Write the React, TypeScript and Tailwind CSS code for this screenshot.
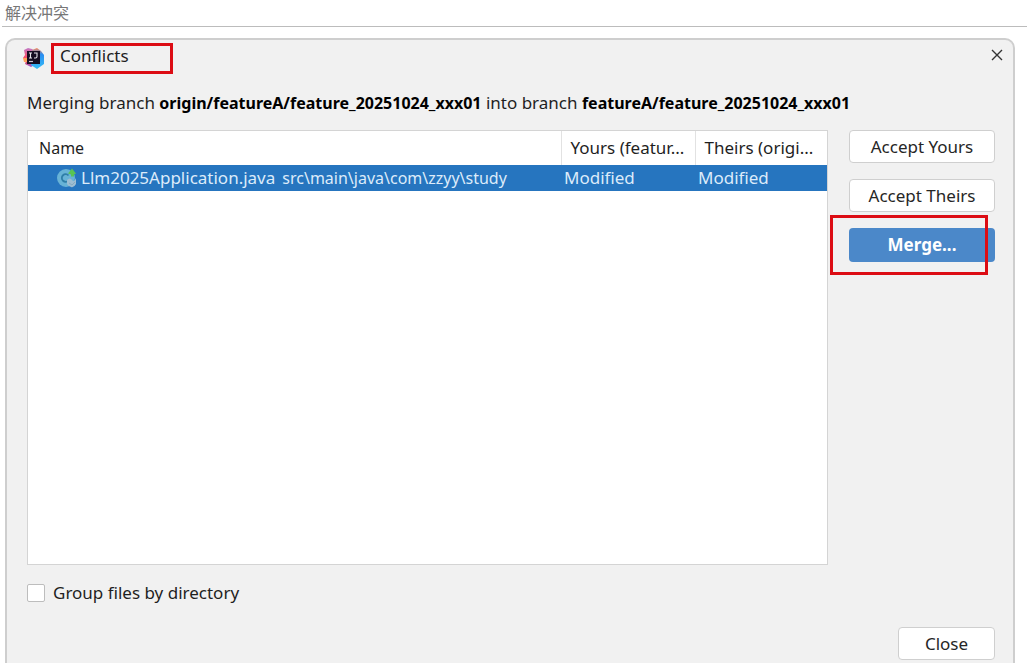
import React, { useState } from 'react'

const files = [
    {
        name: 'Llm2025Application.java',
        path: 'src\\main\\java\\com\\zzyy\\study',
        yours: 'Modified',
        theirs: 'Modified',
    },
]

function IdeaLogo() {
    return (
        <svg width="22" height="22" viewBox="0 0 22 22" aria-hidden="true">
            <defs>
                <linearGradient id="warm" x1="0" y1="0" x2="0" y2="1">
                    <stop offset="0" stopColor="#c07ac8" />
                    <stop offset="0.4" stopColor="#f0567a" />
                    <stop offset="0.7" stopColor="#f5455c" />
                    <stop offset="1" stopColor="#8a5cd8" />
                </linearGradient>
                <linearGradient id="cool" x1="0" y1="0" x2="0" y2="1">
                    <stop offset="0" stopColor="#ff8a5c" />
                    <stop offset="0.3" stopColor="#2b8cf0" />
                    <stop offset="1" stopColor="#35bdf7" />
                </linearGradient>
            </defs>
            <path d="M1 2l4-2 4 1 4 3v12l-5 3-6-3 1-3-3-3 2-3z" fill="url(#warm)" />
            <path d="M0 10h5v4H1z" fill="#ffa35c" />
            <path d="M9 2l5-2 4 3 3 4v9l-7 5-6-4z" fill="url(#cool)" />
            <path d="M4 3h13v13H4z" fill="#150d22" />
            <path d="M6 5h3M7.5 5v5M6 10h3M11 5h3v3.5q0 1.5-1.5 1.5H11" fill="none" stroke="#e8e4ec" strokeWidth="1.1" />
            <path d="M6 13.5h4" stroke="#c9c2d0" strokeWidth="1.2" />
        </svg>
    )
}

function ClassIcon() {
    return (
        <svg className="shrink-0" width="22" height="22" viewBox="0 0 22 22" aria-hidden="true">
            <circle cx="10" cy="11" r="9" fill="#68b3d6" />
            <path d="M12.5 8.5a3.8 3.8 0 1 0 0 5" fill="none" stroke="#2f7fa8" strokeWidth="1.8" />
            <path d="M12 6.5l4-5 4 5-2 1v2h-3v-2z" fill="#58c553" />
            <path d="M11 13q3-3 5 0t4-2v6q-2 4-5 3t-4-3z" fill="#9dbdd2" />
            <path d="M13 16l3 2 3-3" fill="none" stroke="#86a9c0" />
        </svg>
    )
}

function App() {

    const [grouped, setGrouped] = useState(false)

    const plainButton = 'h-[33px] rounded border border-[#cfcfcf] bg-white text-[#262626]'

    return (

        <div className="flex min-h-screen flex-col bg-white pb-[3px] font-['Noto_Sans','Noto_Sans_CJK_SC',sans-serif] text-[17px] leading-6 text-[#1f1f1f]">

            {/* Page heading */}
            <h1 className="ml-[2px] h-[27px] border-b border-[#bcbcbc] pl-[3px] font-['Noto_Sans_CJK_SC',sans-serif] text-base text-[#777]">解决冲突</h1>

            {/* Dialog */}
            <section className="mr-3 mt-[11px] ml-[5px] flex flex-1 flex-col rounded-t-[10px] border-2 border-b-0 border-[#cecece] bg-[#f1f1f1] pr-[18px] pb-[3px] pl-5">

                <header className="flex h-[34px] items-start justify-between">
                    <div className="-ml-1 flex items-center pt-[3px]">
                        <IdeaLogo />
                        <h2 className="ml-[6px] h-[31px] w-[122px] border-[3px] border-[#dc0c14] pl-[6px] leading-5">Conflicts</h2>
                    </div>
                    <button type="button" aria-label="Close dialog" className="-mr-2 pt-[9px]">
                        <svg width="12" height="12" viewBox="0 0 12 12">
                            <path d="M1 1l10 10M11 1L1 11" stroke="#333" strokeWidth="1.4" />
                        </svg>
                    </button>
                </header>

                <p className="mt-[17px] whitespace-nowrap">
                    Merging branch <b className="text-base text-black">origin/featureA/feature_20251024_xxx01</b> into branch <b className="text-base text-black">featureA/feature_20251024_xxx01</b>
                </p>

                <div className="mt-[15px] flex flex-1 gap-[21px]">

                    <div className="min-w-0 flex-1 border border-[#d4d4d4] bg-white">
                        <table className="w-full table-fixed border-collapse text-left">
                            <thead>
                                <tr className="h-[34px]">
                                    <th className="pl-[11px] text-base font-normal">Name</th>
                                    <th className="w-[134px] border-l border-[#e2e2e2] pl-[9px] font-normal whitespace-nowrap">Yours (featur...</th>
                                    <th className="w-[132px] border-l border-[#e2e2e2] pl-[9px] font-normal whitespace-nowrap">Theirs (origi...</th>
                                </tr>
                            </thead>
                            <tbody>
                                {files.map((file) => (
                                    <tr key={file.name} className="h-[26px] bg-[#2675bf] text-[#dcebfa]">
                                        <td className="pl-7">
                                            <div className="flex items-center gap-[3px] whitespace-nowrap">
                                                <ClassIcon />
                                                <span>{file.name}</span>
                                                <span className="ml-1 text-base">{file.path}</span>
                                            </div>
                                        </td>
                                        <td className="pl-[3px]">{file.yours}</td>
                                        <td className="pl-[3px]">{file.theirs}</td>
                                    </tr>
                                ))}
                            </tbody>
                        </table>
                    </div>

                    <div className="flex w-[146px] flex-col gap-4">
                        <button type="button" className={plainButton}>Accept Yours</button>
                        <button type="button" className={plainButton}>Accept Theirs</button>
                        <div className="relative">
                            <button type="button" className="h-[34px] w-full rounded bg-[#4b88c9] font-bold text-white">Merge...</button>
                            <div className="pointer-events-none absolute -top-[13px] right-[7px] -bottom-[13px] -left-[19px] border-[3px] border-[#dc0c14]" />
                        </div>
                    </div>

                </div>

                <label className="mt-4 flex items-center gap-2 self-start">
                    <input
                        type="checkbox"
                        checked={grouped}
                        onChange={(e) => setGrouped(e.target.checked)}
                        className="size-[18px] appearance-none rounded-xs border border-[#bdbdbd] bg-white checked:bg-[#4b88c9]"
                    />
                    Group files by directory
                </label>

                <footer className="mt-[22px] flex justify-end">
                    <button type="button" className={`${plainButton} w-[97px]`}>Close</button>
                </footer>

            </section>

        </div>

    )

}

export default App
